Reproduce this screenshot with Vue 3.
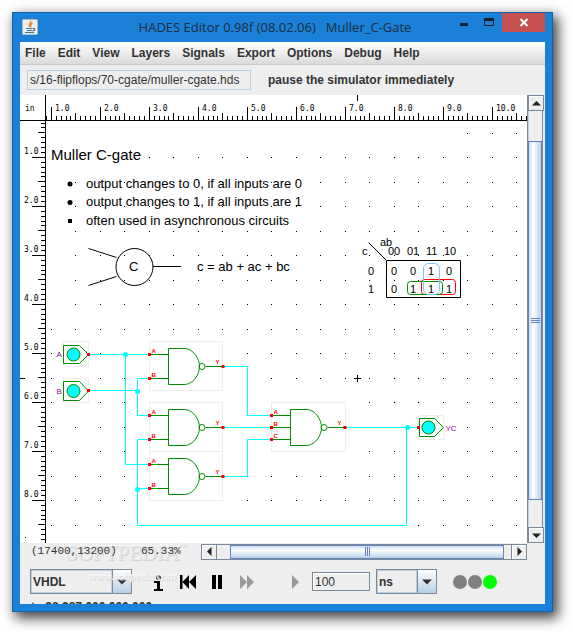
<script setup>
import { ref } from 'vue'

const menus = ['File', 'Edit', 'View', 'Layers', 'Signals', 'Export', 'Options', 'Debug', 'Help']
const path = ref('s/16-flipflops/70-cgate/muller-cgate.hds')
const language = ref('VHDL')
const step = ref('100')
const unit = ref('ns')

/* Rulers: ten ticks per inch, 49 px per inch */
const hTicks = Array.from({ length: 99 }, (_, i) => {
  const k = i - 1
  return { at: Math.floor(51.3 + 4.9 * k), len: k % 10 === 0 ? 13 : Math.abs(k % 10) === 5 ? 7 : 4 }
}).filter(t => t.at < 528)
const vTicks = Array.from({ length: 87 }, (_, i) => {
  const k = i - 7
  return { at: Math.floor(157.3 + 4.9 * k), len: k % 10 === 0 ? 13 : Math.abs(k % 10) === 5 ? 7 : 4 }
}).filter(t => t.at < 543)
const hLabels = Array.from({ length: 10 }, (_, i) => ({ text: `${i + 1}.0`, at: 55 + 49 * i }))
const vLabels = Array.from({ length: 8 }, (_, i) => ({ text: `${i + 1}.0`, at: 154 + 49 * i }))

const boxes = [
  [63, 341, 25, 25], [63, 378, 25, 24], [149, 341, 73, 49], [149, 402, 73, 49],
  [149, 451, 73, 49], [271, 402, 74, 49], [418, 415, 25, 24],
]
const firstDot = row => (row === 0 ? 460 : row === 1 ? 140 : row < 8 ? 70 : 50)
const dots = []
for (let r = 0; r < 17; r++) {
  for (let c = 0; c < 20; c++) {
    const x = Math.floor(51 + 24.5 * c)
    const y = Math.floor(133 + 24.5 * r)
    const hidden = boxes.some(([bx, by, w, h]) => x >= bx && x <= bx + w && y >= by && y <= by + h)
    if (x >= firstDot(r) && !hidden) dots.push({ x, y })
  }
}

const gates = [
  { x: 149, y: 366, pins: [['A', -12], ['B', 12]] },
  { x: 149, y: 427, pins: [['A', -12], ['B', 12]] },
  { x: 149, y: 476, pins: [['A', -12], ['B', 12]] },
  { x: 271, y: 427, pins: [['A', -12], ['B', 0], ['C', 12]] },
]
const wires = [
  'M88 354H149', 'M125 354V464H149', 'M88 390H137', 'M149 378H137V415H149',
  'M149 439H137V525H406V427', 'M137 488H149', 'M222 366H247V415H271',
  'M222 427H271', 'M222 476H247V439H271', 'M345 427H418',
]
const joints = [[125, 354], [137, 391], [137, 489], [407, 427]]
const karnaugh = [
  ['00', 388, 255], ['01', 407, 255], ['11', 426, 255], ['10', 444, 255],
  ['0', 368, 275], ['0', 391, 275], ['0', 410, 275], ['1', 428, 275], ['0', 446, 275],
  ['1', 368, 293], ['0', 391, 293], ['1', 410, 293], ['1', 428, 293], ['1', 446, 293],
]
</script>

<template>
  <div class="desktop">
    <main class="window">
      <header class="titlebar">
        <svg class="java" viewBox="0 0 16 16" aria-hidden="true">
          <rect x=".5" y=".5" width="15" height="15" rx="1" fill="#eceeee" stroke="#aebbc4" />
          <path d="M8.500 2C10 4 5.500 5 7.500 8M10.500 4C7.500 5.500 9.500 6.500 8.500 8" fill="none" stroke="#e8791f" stroke-width="1.300" />
          <path d="M4 9.500H10.500M5 11.500H10M3 13.500H12M11 9.500C14 9 13 12 10.500 11.800" fill="none" stroke="#48749a" stroke-width="1.200" />
        </svg>
        <h1>HADES Editor 0.98f (08.02.06) &nbsp; Muller_C-Gate</h1>
        <div class="controls">
          <button class="ctl" aria-label="Minimize"><svg viewBox="0 0 25 19"><path d="M8 11.500H16" stroke="#1c2024" stroke-width="3" /></svg></button>
          <button class="ctl" aria-label="Maximize"><svg viewBox="0 0 25 19"><path d="M7.500 6V12.500H16.500V6" fill="none" stroke="#1c2024" /><path d="M7 6.500H17" stroke="#1c2024" stroke-width="3" /></svg></button>
          <button class="ctl close" aria-label="Close"><svg viewBox="0 0 43 19"><path d="M18.500 6L25.500 13M25.500 6L18.500 13" stroke="#fff" stroke-width="2" /></svg></button>
        </div>
      </header>

      <div class="client">
        <nav class="menubar">
          <button v-for="m in menus" :key="m">{{ m }}</button>
        </nav>

        <div class="toolbar">
          <input v-model="path" class="path" aria-label="Design file" />
          <span class="hint">pause the simulator immediately</span>
        </div>

        <div class="work">
          <svg class="canvas" role="img" aria-label="Muller C-gate schematic">
            <g transform="translate(-20 -95)">
              <g class="dots"><rect v-for="d in dots" :key="d.x + '-' + d.y" :x="d.x" :y="d.y" width="1" height="1" /></g>

              <g class="ruler">
                <rect x="20" y="120" width="2000" height="1" />
                <rect x="45" y="95" width="1" height="2000" />
                <rect v-for="t in hTicks" :key="'h' + t.at" :x="t.at" :y="120 - t.len" width="1" :height="t.len" />
                <rect v-for="t in vTicks" :key="'v' + t.at" :x="45 - t.len" :y="t.at" :width="t.len" height="1" />
                <rect x="357" y="95" width="1" height="6" />
                <rect x="20" y="378" width="5" height="1" />
                <rect x="25" y="537" width="1" height="1" />
                <text x="25" y="111">in</text>
                <text v-for="l in hLabels" :key="'hl' + l.text" :x="l.at" y="111">{{ l.text }}</text>
                <text v-for="l in vLabels" :key="'vl' + l.text" x="24" :y="l.at">{{ l.text }}</text>
              </g>

              <g class="note">
                <text class="heading" x="51" y="160">Muller C-gate</text>
                <circle cx="70" cy="184" r="2.500" />
                <circle cx="70" cy="202.500" r="2.500" />
                <rect x="68" y="219" width="4" height="4" />
                <text x="86" y="188">output changes to 0, if all inputs are 0</text>
                <text x="86" y="206">output changes to 1, if all inputs are 1</text>
                <text x="86" y="225">often used in asynchronous circuits</text>
                <text x="129" y="271">C</text>
                <text x="197" y="271">c = ab + ac + bc</text>
              </g>

              <g class="ink">
                <circle cx="134.500" cy="267" r="18.500" />
                <path d="M88.500 248.500L116.500 257.500M88.500 285.500L116.500 276.500M153 266.500H181" />
                <path d="M368.500 242.500L386.500 260.500V297.500H460.500V260.500H386.500" />
                <path d="M354 378.500H361M357.500 375V382" />
              </g>
              <rect class="loop red" x="421.500" y="279.500" width="34" height="15" rx="3" />
              <rect class="loop green" x="407.500" y="281.500" width="35" height="13" rx="3" />
              <rect class="loop blue" x="423.500" y="263.500" width="16" height="31" rx="5" />
              <g class="kmap">
                <text x="380" y="246">ab</text>
                <text x="362" y="255">c</text>
                <text v-for="(k, i) in karnaugh" :key="i" :x="k[1]" :y="k[2]">{{ k[0] }}</text>
              </g>

              <g transform="translate(.5 .5)">
                <rect v-for="(b, i) in boxes" :key="i" class="bounds" :x="b[0]" :y="b[1]" :width="b[2]" :height="b[3]" />
                <g v-for="(g, i) in gates" :key="i" class="gate" :transform="`translate(${g.x} ${g.y})`">
                  <path d="M19 -18H36C44 -17 50 -8 50 0C50 8 44 17 36 18H19Z" />
                  <circle cx="52.500" cy="0" r="3" />
                  <path d="M56 0H73" />
                  <path v-for="p in g.pins" :key="p[0]" :d="`M1 ${p[1]}H19`" />
                </g>
                <path v-for="w in wires" :key="w" class="wire" :d="w" />
                <circle v-for="(j, i) in joints" :key="i" class="joint" :cx="j[0]" :cy="j[1]" r="2.500" />
                <g v-for="(g, i) in gates" :key="'p' + i" class="pins" :transform="`translate(${g.x} ${g.y})`">
                  <g v-for="p in g.pins" :key="p[0]">
                    <rect x="-1.500" :y="p[1] - 1.5" width="3" height="3" />
                    <text x="2" :y="p[1] - 2">{{ p[0] }}</text>
                  </g>
                  <rect x="72" y="-1.500" width="3" height="3" />
                  <text x="66" y="-3">Y</text>
                </g>
                <g class="gate">
                  <path d="M63 345H79L88 354L79 363H63Z" />
                  <circle class="lamp" cx="73" cy="354" r="6.500" />
                  <path d="M63 381H79L88 390.500L79 400H63Z" />
                  <circle class="lamp" cx="73" cy="390.500" r="6.500" />
                  <path d="M419 418H434L443 427L434 436H419Z" />
                  <circle class="lamp" cx="428" cy="427" r="6.500" />
                </g>
                <g class="pins">
                  <rect x="86.500" y="352.500" width="3" height="3" />
                  <rect x="86.500" y="388.500" width="3" height="3" />
                  <rect x="416.500" y="425.500" width="3" height="3" />
                </g>
                <g class="port">
                  <text x="56" y="356">A</text>
                  <text x="56" y="393">B</text>
                  <text x="445" y="430">YC</text>
                </g>
              </g>
            </g>
          </svg>

          <div class="vbar">
            <button class="arrow" aria-label="Scroll up"><svg viewBox="0 0 9 9"><path d="M0 6.500L4.500 2L9 6.500Z" /></svg></button>
            <div class="vtrack"><div class="thumb"><i /><i /><i /></div></div>
            <button class="arrow" aria-label="Scroll down"><svg viewBox="0 0 9 9"><path d="M0 2.500L4.500 7L9 2.500Z" /></svg></button>
          </div>
        </div>

        <div class="status">
          <div class="brand">SOFTPEDIA<small>™</small></div>
          <div class="site">www.softpedia.com</div>
          <output class="coords">(17400,13200)</output>
          <output class="zoom">65.33%</output>
          <div class="hbar">
            <button class="arrow" aria-label="Scroll left"><svg viewBox="0 0 9 9"><path d="M6.500 0L2 4.500L6.500 9Z" /></svg></button>
            <div class="htrack"><div class="thumb"><i /><i /><i /></div></div>
            <button class="arrow" aria-label="Scroll right"><svg viewBox="0 0 9 9"><path d="M2.500 0L7 4.500L2.500 9Z" /></svg></button>
          </div>
        </div>

        <div class="sim">
          <label class="combo language">
            <select v-model="language" aria-label="Simulation model"><option>VHDL</option></select>
            <span class="drop"><svg viewBox="0 0 10 6"><path d="M0 .5H10L5 5.500Z" /></svg></span>
          </label>
          <div class="transport">
            <button aria-label="Information"><svg viewBox="0 0 24 24"><circle cx="11.500" cy="7.500" r="2.500" /><path d="M7 11H13V19H16V21H7V19H10V13H7Z" /></svg></button>
            <button aria-label="Rewind"><svg viewBox="0 0 24 24"><path d="M4 5H6.500V19H4ZM6.500 12L13 5V19ZM13 12L20 5V19Z" /></svg></button>
            <button aria-label="Pause"><svg viewBox="0 0 24 24"><path d="M7 5H11V19H7ZM13 5H17V19H13Z" /></svg></button>
            <button class="off" aria-label="Fast forward"><svg viewBox="0 0 24 24"><path d="M6 5L13 12L6 19ZM13 5L20 12L13 19Z" /></svg></button>
          </div>
          <button class="single off" aria-label="Run step"><svg viewBox="0 0 24 24"><path d="M9 5L16 12L9 19Z" /></svg></button>
          <input v-model="step" class="step" aria-label="Step length" />
          <label class="combo unit">
            <select v-model="unit" aria-label="Time unit"><option>ns</option></select>
            <span class="drop"><svg viewBox="0 0 10 6"><path d="M0 .5H10L5 5.500Z" /></svg></span>
          </label>
          <div class="lights"><b /><b /><b class="go" /></div>
        </div>
        <div class="clock">t= 28.287.000.000.000</div>
      </div>
    </main>
  </div>
</template>

<style>
body { background: #fff; }
</style>

<style scoped>
* { box-sizing: border-box; }
button, input, select { font: inherit; color: inherit; margin: 0; padding: 0; border: 0; border-radius: 0; background: none; }
svg { display: block; }
.desktop {
  height: 100vh;
  padding: 12px 20px 20px 12px;
  display: flex;
  font-family: "Liberation Sans", Arial, sans-serif;
  overflow: hidden;
}
.window {
  flex: 1;
  min-width: 0;
  display: flex;
  flex-direction: column;
  padding: 0 7px;
  background: #1a80d8;
  border: 1px solid #1260a8;
  box-shadow: 4px 5px 12px 1px rgba(0, 0, 0, .75);
}
.titlebar { height: 29px; display: flex; align-items: flex-start; flex: none; }
.java { width: 16px; height: 16px; margin: 6px 0 0 2px; }
h1 {
  flex: 1;
  margin: 4px 0 0;
  padding-left: 60px;
  text-align: center;
  white-space: nowrap;
  font: 13px/20px "Open Sans", "Noto Sans", sans-serif;
  color: #1c2d3c;
}
.controls { display: flex; }
.ctl { width: 25px; height: 19px; }
.ctl svg { width: 100%; height: 19px; }
.close { width: 43px; background: #c75050; }
.client {
  flex: 1;
  min-height: 0;
  margin-bottom: 7px;
  display: flex;
  flex-direction: column;
  background: #eee;
  overflow: hidden;
}
.menubar {
  flex: none;
  height: 23px;
  display: flex;
  gap: 12px;
  padding-left: 5px;
  background: linear-gradient(#fff, #dadada);
  border-bottom: 1px solid #c8c8c8;
  font-weight: bold;
  font-size: 12px;
  color: #333;
}
.toolbar { flex: none; height: 30px; display: flex; align-items: center; gap: 17px; padding-left: 7px; color: #333; }
.path { width: 224px; height: 20px; padding-left: 2px; border: 1px solid #b8cfe5; font-size: 12px; }
.hint { font-size: 12px; font-weight: bold; }
.work { flex: 1; min-height: 0; display: flex; }
.canvas { flex: 1; min-width: 0; height: 100%; background: #fff; overflow: hidden; }
.dots, .ruler rect { shape-rendering: crispEdges; }
.ruler { font: 8px "DejaVu Sans Mono", monospace; }
.note { font-size: 13px; }
.heading { font-size: 15px; }
.kmap { font-size: 11px; }
.ink { fill: none; stroke: #000; }
.loop { fill: none; stroke-width: 1; }
.red { stroke: #f00; }
.green { stroke: #008c00; }
.blue { stroke: #7cc4f8; }
.bounds { fill: none; stroke: #eee; }
.gate { fill: none; stroke: #008c00; }
.wire { fill: none; stroke: #0ff; }
.joint { fill: #0ff; }
.gate .lamp { fill: #0ff; }
.pins { fill: #f00; font: bold 6px "Liberation Sans", sans-serif; }
.port { fill: #a000a0; font: 8px "Liberation Sans", sans-serif; }
.vbar { width: 18px; display: flex; flex-direction: column; padding-right: 2px; border-left: 1px solid #7a8a99; }
.arrow {
  flex: none;
  width: 16px;
  height: 16px;
  display: grid;
  place-items: center;
  border: 1px solid #7a8a99;
  background: #eee;
  box-shadow: inset 1px 1px #fff;
}
.arrow svg { width: 9px; height: 9px; fill: #222; }
.vtrack { flex: 1; display: flex; padding: 30px 0 27px; border-right: 1px solid #7a8a99; box-shadow: inset 1px 0 #b8cfe5; }
.thumb { flex: 1; display: flex; align-items: center; justify-content: center; gap: 1px; border: 1px solid #6382bf; }
.vtrack .thumb { flex-direction: column; background: linear-gradient(90deg, #c8dcef, #fff 35%, #b8cfe5); }
.thumb i { background: #6382bf; }
.vtrack i { width: 9px; height: 1px; }
.htrack { flex: 1; display: flex; padding: 0 7px 0 13px; border: solid #7a8a99; border-width: 1px 0; }
.htrack .thumb { background: linear-gradient(#c8dcef, #fff 35%, #b8cfe5); }
.htrack i { width: 1px; height: 9px; }
.status {
  position: relative;
  flex: none;
  height: 17px;
  display: flex;
  align-items: center;
  padding: 0 18px 0 11px;
  font: 11px/17px "Liberation Mono", monospace;
  color: #333;
}
.coords, .zoom { position: relative; }
.coords { width: 110px; }
.zoom { width: 60px; }
.hbar { flex: 1; display: flex; height: 16px; }
.brand, .site {
  position: absolute;
  pointer-events: none;
  white-space: nowrap;
  font-family: "Liberation Serif", serif;
  color: #e6e6e6;
  text-shadow: 1px 1px 1px #ccc, -1px -1px #f8f8f8;
}
.brand { left: 46px; top: 0; font-size: 21px; line-height: 20px; }
.brand small { font-size: 8px; vertical-align: top; line-height: 8px; }
.site { left: 68px; top: 25px; font-size: 11px; z-index: 1; color: #f4f4f4; }
.sim { flex: none; height: 43px; display: flex; align-items: center; padding-left: 10px; color: #333; font-weight: bold; font-size: 12px; }
.combo { display: flex; height: 25px; border: 1px solid #7a8a99; }
.combo select { flex: 1; min-width: 0; appearance: none; padding-left: 1px; border: 1px solid #b8cfe5; font-weight: bold; }
.drop { width: 19px; display: grid; place-items: center; border-left: 1px solid #7a8a99; background: linear-gradient(#fff, #b8cfe5); pointer-events: none; }
.drop svg { width: 10px; height: 6px; fill: #333; }
.language { width: 102px; }
.transport { display: flex; gap: 5px; margin-left: 15px; }
.transport button, .single { width: 24px; height: 24px; fill: #000; }
.transport .off, .single.off { fill: #999; }
.single { margin-left: 25px; }
.step { width: 58px; height: 19px; margin-left: 5px; padding-left: 2px; border: 1px solid #7a8a99; box-shadow: inset 1px 1px #fff; font-weight: normal; }
.unit { width: 61px; margin-left: 6px; }
.lights { display: flex; gap: 1px; margin-left: 16px; }
.lights b { width: 14px; height: 14px; border-radius: 7px; background: #808080; }
.lights .go { background: #0f0; }
.clock { flex: none; height: 2px; margin-top: -1px; padding-left: 11px; font: bold 12px/10px "Liberation Sans", sans-serif; color: #333; }
</style>
